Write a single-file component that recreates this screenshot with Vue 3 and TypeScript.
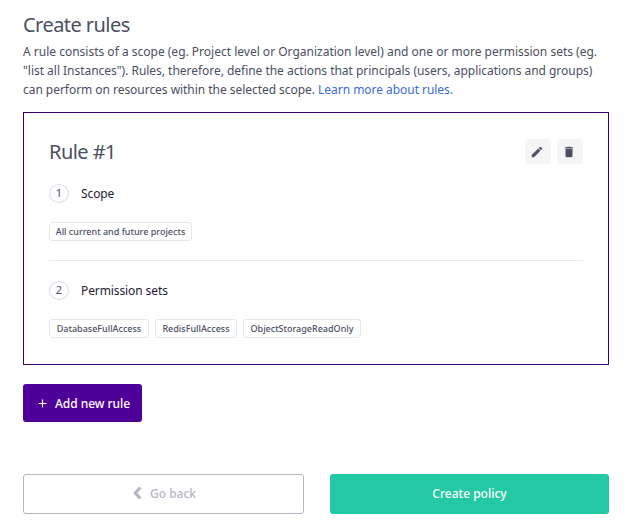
<script setup lang="ts">
interface Step {
  title: string
  tags: string[]
}

const intro: string[] = [
  'A rule consists of a scope (eg. Project level or Organization level) and one or more permission sets (eg.',
  '"list all Instances"). Rules, therefore, define the actions that principals (users, applications and groups)',
]

const steps: Step[] = [
  { title: 'Scope', tags: ['All current and future projects'] },
  {
    title: 'Permission sets',
    tags: ['DatabaseFullAccess', 'RedisFullAccess', 'ObjectStorageReadOnly'],
  },
]
</script>

<template>
  <main class="page">
    <h1 class="title">Create rules</h1>
    <p class="intro">
      <span v-for="(line, i) in intro" :key="i" class="line" :class="'line-' + i">{{ line }}</span>
      <span class="line line-2">can perform on resources within the selected scope. <a class="link">Learn more about rules.</a></span>
    </p>

    <section class="card">
      <header class="card-head">
        <h2 class="card-title">Rule #1</h2>
        <div class="actions">
          <button class="icon-btn" aria-label="Edit">
            <svg width="14" height="14" viewBox="0 0 24 24"><path d="M3 17.25V21h3.75L17.81 9.94l-3.75-3.75L3 17.25zM20.71 7.04a1 1 0 0 0 0-1.41l-2.34-2.34a1 1 0 0 0-1.41 0l-1.83 1.83 3.75 3.75 1.83-1.83z" /></svg>
          </button>
          <button class="icon-btn" aria-label="Delete">
            <svg width="14" height="14" viewBox="0 0 24 24"><path d="M6 19c0 1.1.9 2 2 2h8c1.1 0 2-.9 2-2V7H6v12zM19 4h-3.5l-1-1h-5l-1 1H5v2h14V4z" /></svg>
          </button>
        </div>
      </header>

      <div v-for="(step, i) in steps" :key="step.title" class="step">
        <div class="step-head">
          <span class="num">{{ i + 1 }}</span>
          <span class="step-title">{{ step.title }}</span>
        </div>
        <div class="tags">
          <span v-for="(tag, t) in step.tags" :key="tag" class="tag" :class="'tag-' + i + t">{{ tag }}</span>
        </div>
      </div>
    </section>

    <button class="btn add">
      <svg width="9" height="9" viewBox="0 0 9 9"><path d="M4.5 .5v8M.5 4.5h8" fill="none" stroke="#fff" stroke-width="1.2" /></svg>
      <span>Add new rule</span>
    </button>

    <footer class="footer">
      <button class="btn back">
        <svg width="9" height="14" viewBox="0 0 9 14"><path d="M7.3 1.5 2.3 7l5 5.5" fill="none" stroke="#b2b6c3" stroke-width="3" /></svg>
        <span>Go back</span>
      </button>
      <button class="btn create"><span>Create policy</span></button>
    </footer>
  </main>
</template>

<style>
body {
  background: #fff;
}
</style>

<style scoped>
.page {
  box-sizing: border-box;
  width: 642px;
  height: 528px;
  padding: 11px 33px 0 23px;
  font-family: 'Noto Sans', sans-serif;
  color: #4a4f62;
  overflow: hidden;
}
.title,
.card-title {
  margin: 0;
  font-size: 20px;
  font-weight: 400;
  line-height: 28px;
  letter-spacing: -0.55px;
}
.title {
  padding-bottom: 3px;
}
.intro {
  margin: 0;
  font-size: 12px;
  line-height: 19px;
}
.line {
  display: block;
  white-space: nowrap;
}
.line-1 {
  letter-spacing: -0.03px;
}
.line-2 {
  letter-spacing: -0.04px;
}
.link {
  color: #3b6bd6;
}
.card {
  box-sizing: border-box;
  width: 586px;
  height: 253px;
  margin-top: 13px;
  padding: 26px 25px 0;
  border: 1px solid #36006c;
}
.card-head {
  display: flex;
  justify-content: space-between;
  height: 25px;
}
.card-title {
  line-height: 25px;
}
.actions {
  display: flex;
  gap: 6px;
}
.icon-btn {
  display: flex;
  box-sizing: border-box;
  align-items: center;
  justify-content: center;
  width: 26px;
  height: 25px;
  padding: 0 2px 0 0;
  border: 0;
  border-radius: 3px;
  background: #f5f5f8;
}
.icon-btn svg {
  fill: #4a4f62;
}
.step {
  box-sizing: border-box;
  height: 96px;
  padding-top: 20px;
}
.step + .step {
  border-top: 1px solid #e8e9f2;
}
.step-head {
  display: flex;
  align-items: center;
  gap: 12px;
  height: 19px;
}
.num {
  box-sizing: border-box;
  width: 20px;
  height: 19px;
  border: 1px solid #d9dcec;
  border-radius: 50%;
  font-size: 11px;
  line-height: 16px;
  text-align: center;
}
.step-title {
  font-size: 12px;
  letter-spacing: -0.1px;
  color: #1c1c33;
}
.tags {
  display: flex;
  gap: 6px;
  margin-top: 19px;
}
.tag {
  box-sizing: border-box;
  height: 19px;
  border: 1px solid #e4e6f0;
  border-radius: 3px;
  font-size: 9px;
  font-weight: 500;
  line-height: 17px;
  text-align: center;
  white-space: nowrap;
}
.tag-00 { width: 143px; }
.tag-10 { width: 100px; }
.tag-11 { width: 82px; }
.tag-12 { width: 118px; }
.btn {
  display: flex;
  box-sizing: border-box;
  align-items: center;
  justify-content: center;
  padding: 0;
  border: 0;
  border-radius: 3px;
  font: 500 12px 'Noto Sans', sans-serif;
  color: #fff;
}
.add {
  gap: 8px;
  width: 119px;
  height: 38px;
  margin-top: 19px;
  padding-left: 3px;
  letter-spacing: -0.05px;
  background: #4f0099;
}
.footer {
  display: flex;
  gap: 26px;
  margin-top: 52px;
}
.back {
  gap: 8px;
  width: 281px;
  height: 40px;
  padding: 0 0 2px 2px;
  border: 1px solid #b2b6c3;
  background: #fff;
  color: #b2b6c3;
}
.create {
  width: 279px;
  height: 40px;
  padding-bottom: 2px;
  background: #22c9a4;
}
</style>
